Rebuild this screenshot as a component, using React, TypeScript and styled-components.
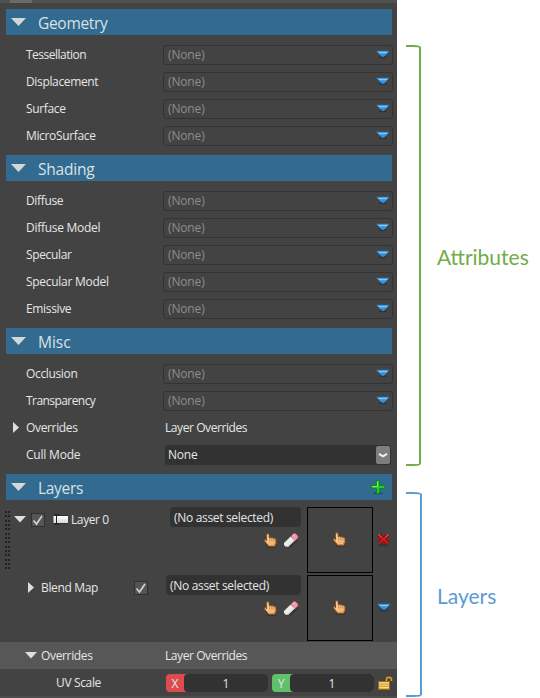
import React from "react";
import styled, { createGlobalStyle, css } from "styled-components";

const Global = createGlobalStyle`
  * { box-sizing: border-box; }
  body { margin: 0; background: #fff; }
  svg { display: block; flex: none; overflow: visible; }
`;

const Page = styled.div`
  display: flex;
  width: 540px;
  height: 698px;
  overflow: hidden;
  font-family: "Open Sans", "Noto Sans", sans-serif;
  font-size: 12px;
  color: #e6e6e6;
`;

const Panel = styled.main`
  width: 397px;
  height: 698px;
  background: #434343;
  display: flex;
  flex-direction: column;
`;

const TopStrip = styled.div`
  height: 3px;
  flex: none;
  margin-bottom: 6px;
  background: linear-gradient(90deg, #515151 10px, #6a6a6a 10px, #6a6a6a 32px, #515151 32px);
`;

const SectionHeader = styled.header`
  height: 26px;
  flex: none;
  margin: 0 5px 0 6px;
  padding: 0 7px 0 5px;
  background: #326b8f;
  display: flex;
  align-items: center;
`;

const SectionTitle = styled.h2<{ $track: number }>`
  margin: 2px 0 0 12px;
  flex: 1;
  font-size: 15.5px;
  font-weight: 400;
  line-height: 22px;
  letter-spacing: ${(p) => p.$track}px;
  color: #d9e1e6;
`;

const HeaderArrow = styled.div`
  margin-bottom: 1px;
`;

const Rows = styled.div`
  margin: 6px 0;
`;

const Row = styled.div`
  height: 27px;
  flex: none;
  display: flex;
  align-items: center;
`;

const Gutter = styled.div`
  width: 26px;
  padding-left: 13px;
`;

const Text = styled.span<{ $track?: number }>`
  white-space: nowrap;
  line-height: 18px;
  letter-spacing: ${(p) => p.$track ?? -0.35}px;
`;

const Label = styled(Text)<{ $width?: number }>`
  width: ${(p) => p.$width ?? 137}px;
  padding-top: 1px;
`;

const Value = styled(Text)`
  padding: 1px 0 0 2px;
`;

const Field = styled.div`
  width: 230px;
  height: 20px;
  padding: 0 2px 0 4px;
  border: 1px solid #333;
  border-radius: 3px;
  color: #8d8d8d;
  display: flex;
  align-items: center;
  justify-content: space-between;
`;

const FieldArrow = styled.div`
  margin-bottom: 1px;
`;

const Select = styled.div`
  width: 226px;
  height: 20px;
  margin-left: 2px;
  padding: 1px 1px 1px 3px;
  border-radius: 3px;
  background: #323232;
  display: flex;
  align-items: center;
  justify-content: space-between;
`;

const SelectButton = styled.div`
  width: 14px;
  height: 18px;
  border-radius: 2px;
  background: #7e7e7e;
  display: grid;
  place-items: center;
`;

const Layers = styled.div`
  height: 142px;
  flex: none;
  padding-top: 7px;
`;

const LayerRow = styled.div`
  height: 68px;
  display: flex;
  align-items: flex-start;
`;

const GripArea = styled.div`
  margin: 4px 4px 0 5px;
`;

const LayerLead = styled.div<{ $indent?: boolean }>`
  height: 25px;
  display: flex;
  align-items: center;
  ${(p) =>
    p.$indent
      ? css`
          width: 166px;
          padding-left: 28px;
        `
      : css`
          width: 156px;
        `}
`;

const LeadName = styled(Text)<{ $width?: number }>`
  width: ${(p) => (p.$width ? `${p.$width}px` : "auto")};
  padding-top: 1px;
`;

const CheckBox = styled.div`
  width: 14px;
  height: 14px;
  border: 1px solid #303030;
  background: #555;
  display: grid;
  place-items: center;
`;

const LeadGap = styled.div<{ $width: number }>`
  flex: none;
  width: ${(p) => p.$width}px;
`;

const Asset = styled.div<{ $width: number }>`
  width: ${(p) => p.$width}px;
  margin-right: 6px;
`;

const AssetName = styled.div`
  height: 20px;
  padding: 2px 4px 0;
  border-radius: 4px;
  background: #323232;
  display: flex;
  align-items: center;
`;

const AssetTools = styled.div`
  display: flex;
  justify-content: flex-end;
  gap: 6px;
  padding: 6px 2px 0 0;
`;

const Thumbnail = styled.div`
  width: 66px;
  height: 66px;
  padding: 0 2px 1px 0;
  border: 1px solid #000;
  display: grid;
  place-items: center;
`;

const Trailing = styled.div<{ $top: number }>`
  margin: ${(p) => p.$top}px 0 0 4px;
`;

const OverrideBar = styled(Row)`
  background: #575757;
  padding-left: 25px;
`;

const ScaleRow = styled(Row)`
  padding-left: 56px;
`;

const Axis = styled.div<{ $color: string }>`
  width: 102px;
  height: 18px;
  margin-right: 4px;
  border-radius: 4px;
  background: ${(p) => p.$color};
  display: flex;
  line-height: 19px;
`;

const AxisName = styled.span`
  width: 18px;
  text-align: center;
`;

const AxisValue = styled.span`
  flex: 1;
  border-radius: 4px;
  background: #323232;
  text-align: center;
`;

const BottomEdge = styled.div`
  flex: 1;
  background: #4d4d4d;
`;

const Notes = styled.aside`
  flex: 1;
  padding-left: 9px;
`;

const Note = styled.section<{ $color: string; $top: number }>`
  margin-top: ${(p) => p.$top}px;
  display: flex;
  align-items: center;
  color: ${(p) => p.$color};
`;

const NoteText = styled.span<{ $track: number }>`
  margin: 2px 0 0 15px;
  font-family: Lato, sans-serif;
  font-size: 21px;
  line-height: 28px;
  letter-spacing: ${(p) => p.$track}px;
  white-space: nowrap;
`;

const BlueArrow = () => (
  <svg width="14" height="9" viewBox="0 0 14 9">
    <defs>
      <linearGradient id="arrowFill" x1="0" y1="0" x2="0" y2="1">
        <stop offset="0" stopColor="#58b4f2" />
        <stop offset="1" stopColor="#1c7fd6" />
      </linearGradient>
    </defs>
    <ellipse cx="7" cy="7" rx="4" ry="1.3" fill="#343434" />
    <path d="M.5 1h12.600L8 7H6z" fill="url(#arrowFill)" />
    <path d="M.5 1.200h12.600" stroke="#2577bd" />
    <path d="M2.500 2.300h8.800" stroke="#8dd4fc" />
  </svg>
);

const BigDown = () => (
  <svg width="15" height="8" viewBox="0 0 15 8">
    <path d="M0 0h15L7.500 8z" fill="#d3d7d9" />
  </svg>
);

const Down = () => (
  <svg width="12" height="7" viewBox="0 0 12 7">
    <path d="M0 0h12L6 6.600z" fill="#dedede" />
  </svg>
);

const Right = () => (
  <svg width="6" height="11" viewBox="0 0 6 11">
    <path d="M0 0v11l6-5.500z" fill="#dedede" />
  </svg>
);

const Check = () => (
  <svg width="12" height="12" viewBox="0 0 12 12">
    <path d="M1.500 6.500l3 3.500L10 2" fill="none" stroke="#d2d2d2" strokeWidth="1.700" />
  </svg>
);

const Chevron = () => (
  <svg width="10" height="6" viewBox="0 0 10 6">
    <path d="M1 1.800L5 4.400 9 1.800" fill="none" stroke="#efefef" strokeWidth="2" />
  </svg>
);

const Plus = () => (
  <svg width="14" height="14" viewBox="0 0 14 14">
    <ellipse cx="7" cy="13.200" rx="5" ry="1" fill="#234f6b" />
    <path d="M5.500 .5h3v5h5v3h-5v5h-3v-5h-5v-3h5z" fill="#2bc435" stroke="#0b8d14" />
    <path d="M6.500 1.500v5h-5" fill="none" stroke="#7ff080" />
  </svg>
);

const Hand = () => (
  <svg width="13" height="15" viewBox="0 0 13 15">
    <ellipse cx="7.500" cy="14" rx="5" ry="1" fill="#343434" />
    <path
      d="M2.700 1.200Q3.900 0 5 1.200V4.700L6.400 4.300L7.500 5L8.700 4.700L9.700 5.400L10.700 5.300L12 6.500V10.500L10.500 13.500H5L2.500 10.500L.5 8V6.700L1.700 6.500L2.900 8z"
      fill="#f0b87a"
      stroke="#8b4f17"
    />
    <path d="M3.900 2v7.500" stroke="#ffdcae" strokeWidth="1.100" />
    <path d="M5.600 5.300v3M7.800 5.500v2.700M9.900 6v2.500" stroke="#c08048" strokeWidth=".7" />
    <path d="M5.500 12.500h4.700l1-2.500" fill="none" stroke="#cf8c4d" />
  </svg>
);

const Eraser = () => (
  <svg width="16" height="15" viewBox="0 0 16 15">
    <path d="M3 14.500h5l7-7v-2l-8 7z" fill="#353535" />
    <path d="M8 3.300L10.800.6h1.800L15 3v1.900L11.800 8z" fill="#ee9aaa" stroke="#a84c60" strokeWidth=".8" />
    <path d="M7.600 3.600L1 10v1.900L2.800 13.800h2.500l6.400-6.200z" fill="#ececec" />
    <path d="M3 13.300h2.200l6.200-5.900" fill="none" stroke="#bdbdbd" strokeWidth="1" />
    <path d="M9 3.600L11.500 1.400" stroke="#ffccd4" />
  </svg>
);

const Remove = () => (
  <svg width="13" height="13" viewBox="0 0 13 13">
    <ellipse cx="6.500" cy="12.300" rx="5.500" ry="1" fill="#343434" />
    <path d="M2 2l9 8.500M11 2L2 10.500" stroke="#8d0b0e" strokeWidth="4" />
    <path d="M2 2l9 8.500M11 2L2 10.500" stroke="#d01a1e" strokeWidth="2.200" />
    <path d="M1.500 2l1.200-.8M10 1.400l1.500.6M2.500 2.500l2 1.800M10.500 2.500l-2 1.800" stroke="#f06a6a" strokeWidth=".9" />
  </svg>
);

const Chip = () => (
  <svg width="16" height="11" viewBox="0 0 16 11">
    <defs>
      <linearGradient id="chipFill" x1="0" y1="0" x2="0" y2="1">
        <stop offset="0" stopColor="#fff" />
        <stop offset="1" stopColor="#d8d8d8" />
      </linearGradient>
    </defs>
    <rect x=".5" y="2" width="14.500" height="7" fill="url(#chipFill)" />
    <path d="M1 1.500h14M1 9.500h14" stroke="#303030" />
    <path d="M1 .5h2l.5.500.500-.500H6M3.500 1v9M1 10.500h2l.5-.5.500.5h2" fill="none" stroke="#222" />
  </svg>
);

const Lock = () => (
  <svg width="15" height="14" viewBox="0 0 15 14">
    <path d="M8.500 6V3.200Q8.600 1.300 11 1.300T13.500 3.500V5" fill="none" stroke="#805a18" strokeWidth="2.400" />
    <path d="M8.500 6V3.200Q8.600 1.300 11 1.300T13.500 3.500V5" fill="none" stroke="#d9a83d" strokeWidth="1.200" />
    <rect x=".5" y="5.500" width="11" height="7.800" fill="#efbd50" stroke="#9a6c1b" />
    <path d="M1 7h10M1 9.200h10M1 11.400h10" stroke="#ffe394" strokeWidth=".9" />
    <path d="M1 8.200h10M1 10.400h10" stroke="#c78c2d" strokeWidth=".7" />
  </svg>
);

const Grip = () => (
  <svg width="5" height="58" viewBox="0 0 5 58" shapeRendering="crispEdges">
    {Array.from({ length: 14 }, (_, i) => (
      <path key={i} d={`M0 ${Math.round(i * 4.33)}h2v2h-2zM3 ${Math.round(i * 4.33)}h2v2h-2z`} fill="#222" />
    ))}
  </svg>
);

const Bracket = ({ height, x }: { height: number; x: number }) => (
  <svg width="16" height={height} viewBox={`0 0 16 ${height}`}>
    <path
      d={`M0 1H7Q${x} 1 ${x} 2.500V${height - 2.5}Q${x} ${height - 1} 7 ${height - 1}H0`}
      fill="none"
      stroke="currentColor"
      strokeWidth="2"
    />
  </svg>
);

const Heading = ({ title, track = -0.2, children }: { title: string; track?: number; children?: React.ReactNode }) => (
  <SectionHeader>
    <HeaderArrow>
      <BigDown />
    </HeaderArrow>
    <SectionTitle $track={track}>{title}</SectionTitle>
    {children}
  </SectionHeader>
);

const Attribute = ({ name, track }: { name: string; track?: number }) => (
  <Row>
    <Gutter />
    <Label $track={track}>{name}</Label>
    <Field>
      <Text $track={-0.15}>(None)</Text>
      <FieldArrow>
        <BlueArrow />
      </FieldArrow>
    </Field>
  </Row>
);

const AssetPicker = ({ width }: { width: number }) => (
  <>
    <Asset $width={width}>
      <AssetName>
        <Text $track={-0.32}>(No asset selected)</Text>
      </AssetName>
      <AssetTools>
        <Hand />
        <Eraser />
      </AssetTools>
    </Asset>
    <Thumbnail>
      <Hand />
    </Thumbnail>
  </>
);

export default function App() {
  return (
    <Page>
      <Global />
      <Panel>
        <TopStrip />
        <Heading title="Geometry" track={-0.3} />
        <Rows>
          <Attribute name="Tessellation" track={-0.5} />
          <Attribute name="Displacement" />
          <Attribute name="Surface" />
          <Attribute name="MicroSurface" />
        </Rows>
        <Heading title="Shading" />
        <Rows>
          <Attribute name="Diffuse" />
          <Attribute name="Diffuse Model" track={-0.28} />
          <Attribute name="Specular" />
          <Attribute name="Specular Model" track={-0.28} />
          <Attribute name="Emissive" />
        </Rows>
        <Heading title="Misc" track={0} />
        <Rows>
          <Attribute name="Occlusion" />
          <Attribute name="Transparency" track={-0.56} />
          <Row>
            <Gutter>
              <Right />
            </Gutter>
            <Label>Overrides</Label>
            <Value $track={-0.42}>Layer Overrides</Value>
          </Row>
          <Row>
            <Gutter />
            <Label $track={-0.2}>Cull Mode</Label>
            <Select>
              <Text $track={-0.2}>None</Text>
              <SelectButton>
                <Chevron />
              </SelectButton>
            </Select>
          </Row>
        </Rows>
        <Heading title="Layers" track={-0.3}>
          <Plus />
        </Heading>
        <Layers>
          <LayerRow>
            <GripArea>
              <Grip />
            </GripArea>
            <LayerLead>
              <Down />
              <LeadGap $width={5} />
              <CheckBox>
                <Check />
              </CheckBox>
              <LeadGap $width={8} />
              <Chip />
              <LeadGap $width={2} />
              <LeadName $track={-0.4}>Layer 0</LeadName>
            </LayerLead>
            <AssetPicker width={131} />
            <Trailing $top={26}>
              <Remove />
            </Trailing>
          </LayerRow>
          <LayerRow>
            <LayerLead $indent>
              <Right />
              <LeadGap $width={7} />
              <LeadName $width={93}>Blend Map</LeadName>
              <CheckBox>
                <Check />
              </CheckBox>
            </LayerLead>
            <AssetPicker width={135} />
            <Trailing $top={28}>
              <BlueArrow />
            </Trailing>
          </LayerRow>
        </Layers>
        <OverrideBar>
          <Down />
          <LeadGap $width={4} />
          <Label $width={122}>Overrides</Label>
          <Value $track={-0.42}>Layer Overrides</Value>
        </OverrideBar>
        <ScaleRow>
          <Label $width={110}>UV Scale</Label>
          <Axis $color="#dc4c4f">
            <AxisName>X</AxisName>
            <AxisValue>1</AxisValue>
          </Axis>
          <Axis $color="#5fc169">
            <AxisName>Y</AxisName>
            <AxisValue>1</AxisValue>
          </Axis>
          <Lock />
        </ScaleRow>
        <BottomEdge />
      </Panel>
      <Notes>
        <Note $color="#70ad47" $top={45}>
          <Bracket height={421} x={14} />
          <NoteText $track={0}>Attributes</NoteText>
        </Note>
        <Note $color="#5b9bd5" $top={26}>
          <Bracket height={205} x={15} />
          <NoteText $track={0}>Layers</NoteText>
        </Note>
      </Notes>
    </Page>
  );
}
